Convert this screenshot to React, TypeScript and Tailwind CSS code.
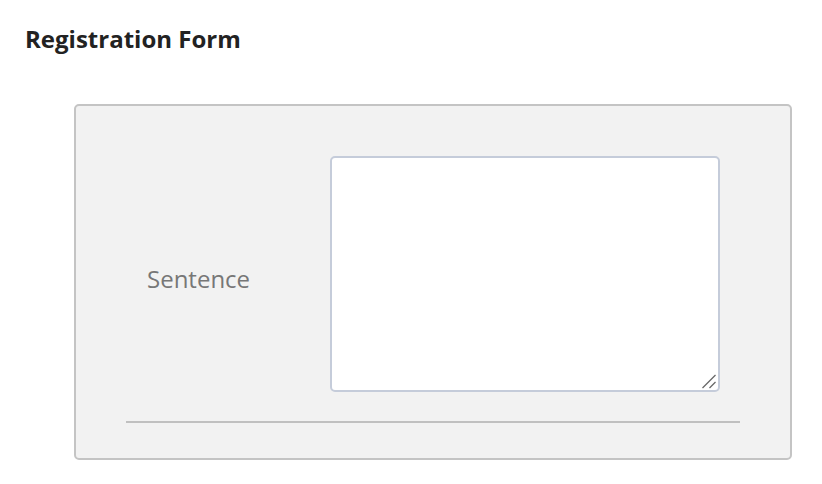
export default function App() {
  return (
    <div className="w-[822px] h-[484px] bg-white" style={{ fontFamily: '"Open Sans", sans-serif' }}>
      <div className="pt-[27px] pl-[25px]">
        <h1 className="text-[24px] leading-[24px] font-bold text-[#222]">Registration Form</h1>
      </div>
      <div className="mt-[53px] ml-[74px] w-[718px] h-[356px] border-2 border-[#c4c4c4] rounded-[5px] bg-[#f2f2f2] px-[50px] pt-[50px]">
        <div className="flex items-center">
          <div className="w-[204px] pl-[21px] pt-[10px] text-[24px] leading-[32px] text-[#777]">Sentence</div>
          <div className="relative">
            <textarea className="block w-[390px] h-[236px] bg-white border-2 border-[#c5ccda] rounded-[5px] outline-none resize-none" />
            <svg className="absolute right-[3px] bottom-[3px]" width="16" height="16" viewBox="0 0 16 16">
              <line x1="1.5" y1="15" x2="14.5" y2="2" stroke="#666" strokeWidth="1.3" />
              <line x1="8.5" y1="15" x2="14.5" y2="9" stroke="#666" strokeWidth="1.3" />
            </svg>
          </div>
        </div>
        <div className="mt-[29px] h-[2px] bg-[#c0c0c0]" />
      </div>
    </div>
  );
}
